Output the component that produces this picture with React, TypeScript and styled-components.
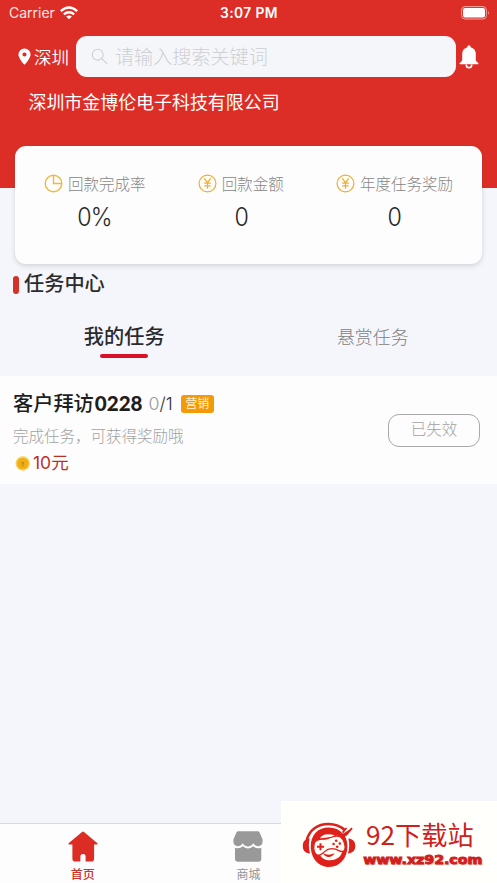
import React from "react";
import styled, { createGlobalStyle } from "styled-components";

const Global = createGlobalStyle`
  * { box-sizing: border-box; }
  body { margin: 0; font-family: "Noto Sans CJK SC", sans-serif; }
  svg { display: block; flex: none; }
`;

const Screen = styled.div`
  position: relative;
  width: 497px;
  height: 883px;
  overflow: hidden;
  display: flex;
  flex-direction: column;
  background: #f4f6fb;
`;

const Header = styled.header`
  flex: none;
  height: 188px;
  background: #dc2e26;
  color: #fff;
`;

const StatusBar = styled.div`
  height: 36px;
  padding: 0 7px 10px 9px;
  display: grid;
  grid-template-columns: 1fr auto 1fr;
  align-items: center;
  font-family: Inter, sans-serif;
  font-size: 14px;
  line-height: 26px;
`;

const Carrier = styled.div`
  display: flex;
  align-items: center;
  gap: 5px;
  color: #fbe4e2;
`;

const Clock = styled.div`
  margin-right: 1px;
  font-weight: 600;
  font-size: 13.8px;
  letter-spacing: 0.4px;
`;

const BatterySlot = styled.div`
  display: flex;
  justify-content: flex-end;
`;

const SearchRow = styled.div`
  display: flex;
  align-items: center;
  height: 41px;
  padding-left: 18px;
`;

const City = styled.div`
  display: flex;
  align-items: center;
  gap: 3px;
  width: 58px;
  font-size: 17.5px;
  font-weight: 350;
  line-height: 40px;
  white-space: nowrap;
`;

const SearchBox = styled.div`
  display: flex;
  align-items: center;
  gap: 7px;
  width: 380px;
  height: 41px;
  margin-right: 3px;
  padding: 0 0 1px 15px;
  border-radius: 11px;
  background: #f4f6f9;
  color: #cfd0d3;
  font-size: 19.1px;
  font-weight: 300;
`;

const Company = styled.div`
  margin: 9px 0 0 28.5px;
  font-size: 17.95px;
  line-height: 30px;
`;

const StatsCard = styled.section`
  flex: none;
  display: flex;
  justify-content: space-between;
  width: 467px;
  height: 118px;
  margin: -42px 0 0 15px;
  padding: 24px 29px 0;
  border-radius: 11px;
  background: #fdfdfd;
  box-shadow: 0 2px 5px rgba(70, 75, 90, 0.2);
`;

const Stat = styled.div`
  display: flex;
  flex-direction: column;
  align-items: center;
`;

const StatLabel = styled.div`
  display: flex;
  align-items: center;
  gap: 5px;
  color: #868686;
  font-size: 15.5px;
  font-weight: 300;
  line-height: 22px;
  height: 25px;

  svg { margin-top: 2px; }
`;

const StatValue = styled.div`
  color: #292929;
  font-family: Inter, sans-serif;
  font-weight: 300;
  font-size: 25px;
  line-height: 45px;
  letter-spacing: -1px;
  transform: scaleX(0.93);
`;

const SectionTitle = styled.h2`
  flex: none;
  display: flex;
  align-items: center;
  gap: 5px;
  height: 38px;
  margin: 0;
  padding-left: 13px;
  color: #2c2c2e;
  font-size: 20.2px;
  font-weight: 500;
  line-height: 36px;

  &::before {
    content: "";
    width: 6px;
    height: 18px;
    margin-top: 3px;
    border-radius: 3px;
    background: #d63129;
  }
`;

const Tabs = styled.div`
  flex: none;
  display: grid;
  grid-template-columns: 1fr 1fr;
  height: 74px;
  padding-top: 17px;
`;

const Tab = styled.div<{ $active?: boolean }>`
  display: flex;
  flex-direction: column;
  align-items: center;
  color: ${(p) => (p.$active ? "#2b2b2d" : "#808183")};
  font-size: ${(p) => (p.$active ? "20.2px" : "17.9px")};
  font-weight: ${(p) => (p.$active ? 500 : 300)};
  line-height: 34px;

  &::after {
    content: "";
    width: 48px;
    height: 4px;
    margin-top: 1px;
    border-radius: 2px;
    background: ${(p) => (p.$active ? "#d81029" : "transparent")};
  }
`;

const TaskItem = styled.article`
  flex: none;
  display: flex;
  align-items: center;
  justify-content: space-between;
  height: 108px;
  padding: 0 17px 0 13px;
  background: #fdfdfd;
`;

const TaskInfo = styled.div`
  display: flex;
  flex-direction: column;
`;

const TaskHeading = styled.div`
  display: flex;
  align-items: center;
  height: 34px;
`;

const TaskName = styled.div`
  color: #1e1e1e;
  font-size: 20.2px;
  font-weight: 500;
  line-height: 34px;
`;

const TaskNumber = styled.span`
  margin-left: 1px;
  font-family: Lato, sans-serif;
  font-size: 20.6px;
  font-weight: 900;
`;

const Progress = styled.div`
  margin: 1px 8px 0 6px;
  color: #333;
  font-family: Inter, sans-serif;
  font-size: 17.8px;
  font-weight: 300;
  line-height: 32px;
`;

const Done = styled.span`
  color: #999;
`;

const Tag = styled.div`
  width: 33px;
  height: 18px;
  margin-top: 2px;
  border-radius: 3px;
  background: #f39a0a;
  color: #fff3cf;
  font-size: 12px;
  font-weight: 400;
  line-height: 16px;
  text-align: center;
`;

const TaskHint = styled.div`
  color: #a2a2a2;
  font-size: 15.5px;
  font-weight: 300;
  line-height: 31px;
`;

const Reward = styled.div`
  display: flex;
  align-items: center;
  gap: 3px;
  padding-left: 2px;
  height: 23px;
  color: #bd3025;
  font-size: 17.5px;
  line-height: 21px;

  svg { margin-top: 2px; }
`;

const Amount = styled.span`
  font-family: Inter, "Noto Sans CJK SC", sans-serif;
`;

const Expired = styled.div`
  width: 92px;
  height: 33px;
  border: 1px solid #a9a9a9;
  border-radius: 11px;
  color: #a2a2a2;
  font-size: 15.5px;
  font-weight: 300;
  line-height: 27px;
  text-align: center;
`;

const BottomNav = styled.nav`
  flex: none;
  display: grid;
  grid-template-columns: repeat(3, 1fr);
  height: 60px;
  margin-top: auto;
  border-top: 1px solid #d8d9dc;
  background: #fdfdfd;
`;

const NavItem = styled.div<{ $active?: boolean }>`
  display: flex;
  flex-direction: column;
  align-items: center;
  padding-top: 7px;
  color: ${(p) => (p.$active ? "#cf3027" : "#929292")};
  font-size: 12px;
  font-weight: ${(p) => (p.$active ? 500 : 400)};
  line-height: 21px;
`;

const SiteBadge = styled.aside`
  position: absolute;
  right: 0;
  bottom: 0;
  display: flex;
  gap: 5px;
  width: 216px;
  height: 82px;
  padding: 20px 0 0 21px;
  background: #fffffb;
`;

const BadgeText = styled.div`
  display: flex;
  flex-direction: column;
  color: #cf201d;
`;

const BadgeName = styled.div`
  height: 30px;
  padding-left: 4px;
  font-size: 26.2px;
  line-height: 27px;
  white-space: nowrap;
`;

const BadgeUrl = styled.div`
  padding-left: 1px;
  font-family: "DejaVu Sans", sans-serif;
  font-size: 12px;
  font-weight: 700;
  line-height: 18px;
  -webkit-text-stroke: 0.9px #cf201d;
  text-shadow: 1px 1px 1px #d9aaa5;
  transform: scaleX(1.18);
  transform-origin: left;
`;

const WifiIcon = () => (
  <svg width="18" height="14" viewBox="0 0 18 14" fill="none" stroke="#fff" strokeWidth="2.4">
    <path d="M.8 5.1Q9-2 17.2 5.1M3.8 8.3q5.2-4.3 10.4 0" />
    <path d="M6.1 10.6Q9 8.2 11.9 10.6L9 13.3Z" fill="#fff" stroke="none" />
  </svg>
);

const BatteryIcon = () => (
  <svg width="29" height="14" viewBox="0 0 29 14">
    <rect x=".6" y=".6" width="24.8" height="12.4" rx="3.4" fill="none" stroke="#f1a5a0" />
    <rect x="2" y="2.1" width="22" height="9.4" rx="2" fill="#fff" />
    <path d="M27 4.8q1.8 2 0 4Z" fill="#f1a5a0" />
  </svg>
);

const PinIcon = () => (
  <svg width="13" height="17" viewBox="0 0 13 17">
    <path fill="#fff" fillRule="evenodd" d="M6.5.5A6 6 0 0 0 .4 6.4C.4 10.5 6.5 16.8 6.5 16.8s6.1-6.3 6.1-10.4A6 6 0 0 0 6.5.5Zm0 3.9a2.1 2.1 0 1 1 0 4.2 2.1 2.1 0 0 1 0-4.2Z" />
  </svg>
);

const SearchIcon = () => (
  <svg width="17" height="17" viewBox="0 0 17 17" fill="none" stroke="#cfd0d3" strokeWidth="1.1">
    <circle cx="6.7" cy="6.7" r="5.4" />
    <path d="m10.7 10.7 5.5 5.2" />
  </svg>
);

const BellIcon = () => (
  <svg width="20" height="24" viewBox="0 0 20 24" fill="#fff">
    <path d="M10 .3a1.7 1.7 0 0 0-1.6 1.9C5.2 3 3.2 5.5 3.2 8.8v5.4c0 1.3-.5 2.2-1.6 3L1 17.7c-.8.7-.5 1.6.6 1.6h16.8c1.1 0 1.4-.9.6-1.6l-.6-.5c-1.1-.8-1.6-1.7-1.6-3V8.8c0-3.3-2-5.8-5.2-6.6A1.7 1.7 0 0 0 10 .3Z" />
    <path d="M7.3 19.4v.5a2.7 2.7 0 0 0 5.4 0v-.5" fill="none" stroke="#fff" strokeWidth="1.6" />
  </svg>
);

const PieIcon = () => (
  <svg width="19" height="19" viewBox="0 0 19 19" fill="none" stroke="#f2b73b" strokeWidth="1.4">
    <circle cx="9.5" cy="9.5" r="8.3" />
    <path d="M9.5 1.2v8.3h8.3" />
  </svg>
);

const YuanIcon = () => (
  <svg width="19" height="19" viewBox="0 0 19 19" fill="none" stroke="#f0ad2e" strokeWidth="1.2">
    <circle cx="9.5" cy="9.5" r="8.4" />
    <path d="m6.3 4.3 3.2 4.4 3.2-4.4M9.5 8.7v6M6.2 9.1h6.6M6.2 11.8h6.6" />
  </svg>
);

const CoinIcon = () => (
  <svg width="15" height="16" viewBox="0 0 15 16">
    <circle cx="7.8" cy="7.5" r="7.2" fill="#f6cf52" />
    <circle cx="7.8" cy="7.5" r="5.6" fill="#efae18" />
    <path d="m6.6 6 1.2 1.3L9 6M7.8 7v3.3" fill="none" stroke="#b97f0c" strokeWidth="1" />
  </svg>
);

const HomeIcon = () => (
  <svg width="30" height="32" viewBox="0 0 30 32">
    <path fill="#dc2d25" d="M14 .9q1-.8 2 0l13.4 11.3q.7 1-.6 1.2h-2.7v14.4q0 2.8-2.8 2.8h-5.7v-5.5q0-2.2-2.6-2.2t-2.6 2.2v5.5H7.2q-2.8 0-2.8-2.8V13.4H1.2q-1.2-.2-.6-1.2Z" />
  </svg>
);

const ShopIcon = () => (
  <svg width="30" height="32" viewBox="0 0 30 32" fill="#999">
    <path d="M5.4.3h19.2q1.5 0 2.1 1.4L29.6 8.5v2.6c0 5-7 5.5-9.3 1.2-2 4.1-8.6 4.1-10.6 0C7.4 16.6.4 16.1.4 11.1V8.5l2.9-6.8Q3.9.3 5.4.3Z" />
    <path d="M2 16.7q4.2 1.8 7.9-1.4 5.1 4.5 10.2 0 3.7 3.2 8.2 1.4v11q0 3-3 3H5q-3 0-3-3Z" />
  </svg>
);

const GamepadLogo = () => (
  <svg width="55" height="48" viewBox="0 0 55 48">
    <path d="M4.6 20C7 8.5 16 3 26.5 3c7 0 12.5 2.4 16.6 6.4" fill="none" stroke="#df211c" strokeWidth="2.6" />
    <path d="M7.6 17.5C2 18 .8 21.5.8 25c0 4 1.7 7 7.3 7.5-1.5-5-1.6-10-.5-15ZM46.4 17.5c5.5.5 6.9 4 6.9 7.5s-1.6 7-7.3 7.5c1.5-5 1.6-10 .4-15Z" fill="#df211c" />
    <path d="M27 6.5C15 6.5 8.8 14.5 8.8 25.5S16 46 27 46s18.4-9 18.4-20.5c0-3.8-.8-7-2.3-10L49 7.7l-8.2 5C37.5 8.6 32.7 6.5 27 6.5Z" fill="#df211c" />
    <path d="m40.5 11.6 4-4.6M43.8 14.4 50 7.2" stroke="#df211c" strokeWidth="1.8" />
    <path d="M17 30c.5 6.5 5 9.3 11 9.3C35 39.3 40 35 40.3 29L29 24Z" fill="#fffdf6" />
    <path d="M12.6 21.5c3-4.5 7.4-2.5 12.8-4 5.8-1.6 9.5-4 12.8-1.7 3.5 2.5 6.2 9.7 4.4 13.4-2 3.3-5.5.2-9-1-4.5-1.3-8.3-.2-11 2.4-2.4 2.5-6.4 5.2-9 2.4-2.5-3-2.2-8.5-1-11.5Z" fill="#fffdf6" stroke="#df211c" strokeWidth="1.3" />
    <path d="M18 17.2q2-3.7 7.5-4 4.5 0 7.5 1.2-4 1.4-8 2-4 .5-7 .8Z" fill="#fffdf6" />
    <path d="M15 25.8h7M18.5 22.3v7" stroke="#df211c" strokeWidth="2" />
    <g fill="#df211c">
      <circle cx="34.2" cy="19.8" r="1.3" />
      <circle cx="37.8" cy="22.6" r="1.3" />
      <circle cx="31.6" cy="23" r="1.3" />
      <circle cx="35.2" cy="25.7" r="1.3" />
    </g>
    <path d="M21 32q5 3.2 11.5.3-2.5 4.2-6.5 3.7-3.5-.5-5-4Z" fill="#df211c" />
  </svg>
);

const stats = [
  { icon: <PieIcon />, label: "回款完成率", value: "0%" },
  { icon: <YuanIcon />, label: "回款金额", value: "0" },
  { icon: <YuanIcon />, label: "年度任务奖励", value: "0" },
];

export default function App() {
  return (
    <Screen>
      <Global />
      <Header>
        <StatusBar>
          <Carrier>Carrier <WifiIcon /></Carrier>
          <Clock>3:07 PM</Clock>
          <BatterySlot><BatteryIcon /></BatterySlot>
        </StatusBar>
        <SearchRow>
          <City><PinIcon />深圳</City>
          <SearchBox><SearchIcon />请输入搜索关键词</SearchBox>
          <BellIcon />
        </SearchRow>
        <Company>深圳市金博伦电子科技有限公司</Company>
      </Header>
      <StatsCard>
        {stats.map((s) => (
          <Stat key={s.label}>
            <StatLabel>{s.icon}{s.label}</StatLabel>
            <StatValue>{s.value}</StatValue>
          </Stat>
        ))}
      </StatsCard>
      <SectionTitle>任务中心</SectionTitle>
      <Tabs>
        <Tab $active>我的任务</Tab>
        <Tab>悬赏任务</Tab>
      </Tabs>
      <TaskItem>
        <TaskInfo>
          <TaskHeading>
            <TaskName>客户拜访<TaskNumber>0228</TaskNumber></TaskName>
            <Progress><Done>0</Done>/1</Progress>
            <Tag>营销</Tag>
          </TaskHeading>
          <TaskHint>完成任务，可获得奖励哦</TaskHint>
          <Reward><CoinIcon /><Amount>10元</Amount></Reward>
        </TaskInfo>
        <Expired>已失效</Expired>
      </TaskItem>
      <BottomNav>
        <NavItem $active><HomeIcon />首页</NavItem>
        <NavItem><ShopIcon />商城</NavItem>
      </BottomNav>
      <SiteBadge>
        <GamepadLogo />
        <BadgeText>
          <BadgeName>92下载站</BadgeName>
          <BadgeUrl>www.xz92.com</BadgeUrl>
        </BadgeText>
      </SiteBadge>
    </Screen>
  );
}
